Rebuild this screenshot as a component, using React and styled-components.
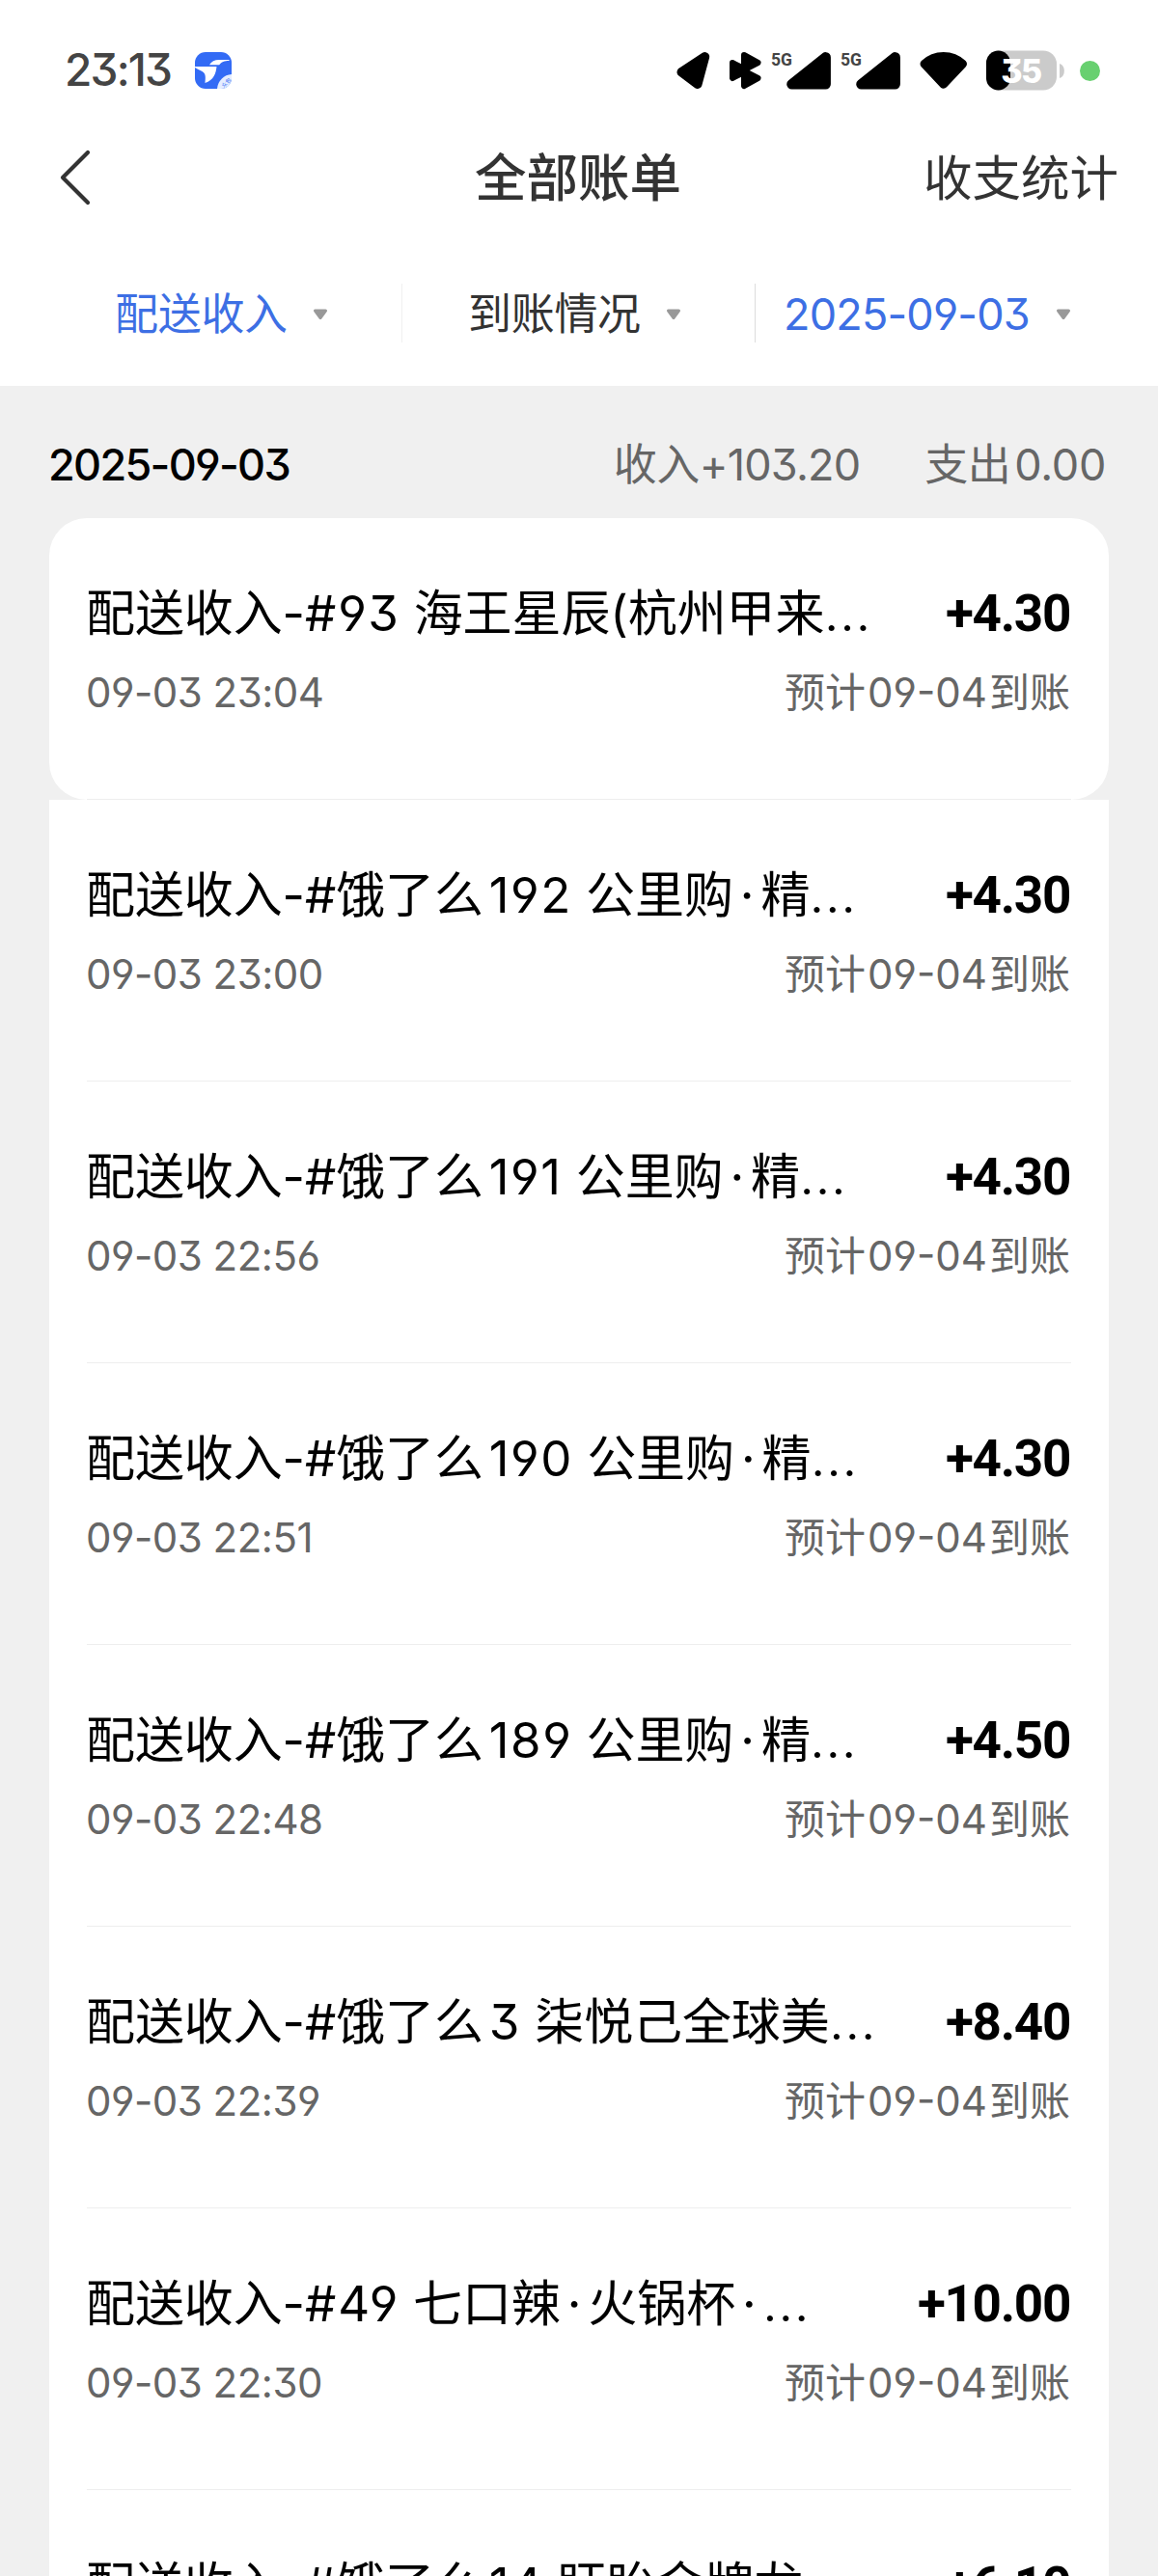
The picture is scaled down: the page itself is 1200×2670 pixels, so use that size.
import React from "react";
import styled, { createGlobalStyle, css } from "styled-components";

const GlobalStyle = createGlobalStyle`
  * { box-sizing: border-box; }
  body {
    margin: 0;
    background: #f0f0f0;
    font-family: Inter, "Noto Sans CJK SC", sans-serif;
    font-feature-settings: "cv03", "cv04", "cv09";
  }
`;

const Screen = styled.div`
  width: 1200px;
  height: 2670px;
  overflow: hidden;
  display: flex;
  flex-direction: column;
  background: #f0f0f0;
`;

const TopArea = styled.header`
  flex: none;
  height: 400px;
  background: #fff;
  display: flex;
  flex-direction: column;
`;

/* Status bar */
const StatusBar = styled.div`
  display: flex;
  justify-content: space-between;
  height: 62px;
  margin-top: 42px;
  padding: 0 60px 0 67px;
`;

const StatusGroup = styled.div`
  display: flex;
  align-items: center;

  svg {
    display: block;
    overflow: visible;
  }
`;

const Clock = styled.span`
  width: 135px;
  height: 62px;
  font-size: 46px;
  font-weight: 500;
  line-height: 61px;
  letter-spacing: -1.8px;
  color: #444;
`;

const IconSlot = styled.span`
  margin-left: ${(p) => p.$gap}px;
`;

const PrivacyDot = styled.span`
  width: 21px;
  height: 21px;
  margin-left: 16px;
  border-radius: 50%;
  background: #68d070;
`;

/* Navigation */
const NavBar = styled.nav`
  display: grid;
  grid-template-columns: 1fr auto 1fr;
  height: 76px;
  margin-top: 43px;
  line-height: 75px;
  color: #333;
`;

const BackButton = styled.button`
  display: flex;
  align-items: center;
  padding: 0 0 2px 60px;
  border: 0;
  background: none;
`;

const NavTitle = styled.h1`
  margin: 0 2px 0 0;
  font-size: 53.5px;
  font-weight: 500;
`;

const NavAction = styled.a`
  padding-right: 41px;
  text-align: right;
  font-size: 50.5px;
`;

/* Filters */
const FilterBar = styled.div`
  display: grid;
  grid-template-columns: 366px 366px 1fr;
  height: 61px;
  margin: 71px 0 0 51px;
`;

const Filter = styled.div`
  display: flex;
  align-items: center;
  gap: ${(p) => p.$gap || 26}px;
  padding: 2px 0 0 ${(p) => p.$inset}px;
  font-size: 45px;
  line-height: 59px;
  letter-spacing: ${(p) => p.$tracking || "-0.3px"};
  color: ${(p) => (p.$active ? "#3d6fe4" : "#333")};
  ${(p) =>
    p.$divider &&
    css`
      border-right: 1px solid ${p.$divider};
    `}
`;

/* Day summary */
const DayHeader = styled.section`
  flex: none;
  display: flex;
  height: 137px;
  padding: 52px 54px 0 50px;
  font-size: 45px;
  line-height: 60px;
  color: #666;
`;

const DayDate = styled.span`
  margin-right: auto;
  font-weight: 500;
  letter-spacing: -1.7px;
  color: #000;
`;

const DayTotal = styled.span`
  margin-left: ${(p) => p.$gap || 0}px;
  letter-spacing: -0.5px;
`;

const TotalValue = styled.span`
  margin-left: ${(p) => p.$lead || 0}px;
  letter-spacing: ${(p) => p.$tracking || "-0.5px"};
`;

/* Bills */
const BillList = styled.main`
  flex: none;
  margin: 0 51px;
`;

const BillCard = styled.article`
  height: 292px;
  padding: 69px 39px 0;
  background: #fff;
  border-radius: ${(p) => (p.$rounded ? "39px" : "0")};
`;

const BillBody = styled.div`
  height: 223px;
  border-bottom: 1px solid #eee;
`;

const BillLine = styled.div`
  display: flex;
  justify-content: space-between;
  white-space: pre;
`;

const BillTitle = styled.span`
  margin-left: -1px;
  font-size: 51px;
  line-height: 60px;
  letter-spacing: -0.1px;
  color: #000;
`;

const Digits = styled.span`
  margin-left: ${(p) => (p.$afterHan ? "6px" : "2px")};
  letter-spacing: 1.5px;
`;

const Dot = styled.span`
  padding: 0 7px;
`;

const Ellipsis = styled.span`
  margin-left: -1px;
  font-size: 58px;
  font-weight: 300;
  line-height: 0;
`;

const Amount = styled.span`
  margin-right: 1px;
  font-family: Roboto, "Liberation Sans", sans-serif;
  font-size: 53px;
  font-weight: 700;
  line-height: 60px;
  letter-spacing: -1.3px;
  color: #000;
`;

const BillMeta = styled(BillLine)`
  margin-top: 27px;
  font-size: 42px;
  line-height: 50px;
  color: #666;
`;

const Time = styled.span`
  margin-left: -1px;
  letter-spacing: -0.5px;
`;

const Arrival = styled.span`
  margin-right: 1px;
`;

const ArrivalDate = styled.span`
  margin: 0 2px;
`;

const bills = [
  { title: "配送收入-#93 海王星辰(杭州甲来…", amount: "+4.30", time: "09-03 23:04" },
  { title: "配送收入-#饿了么192 公里购·精…", amount: "+4.30", time: "09-03 23:00" },
  { title: "配送收入-#饿了么191 公里购·精…", amount: "+4.30", time: "09-03 22:56" },
  { title: "配送收入-#饿了么190 公里购·精…", amount: "+4.30", time: "09-03 22:51" },
  { title: "配送收入-#饿了么189 公里购·精…", amount: "+4.50", time: "09-03 22:48" },
  { title: "配送收入-#饿了么3 柒悦己全球美…", amount: "+8.40", time: "09-03 22:39" },
  { title: "配送收入-#49 七口辣·火锅杯·…", amount: "+10.00", time: "09-03 22:30" },
  { title: "配送收入-#饿了么14 盱眙金牌龙…", amount: "+6.10" },
];

function MixedText({ text }) {
  const parts = text.split(/(\d+|·|…)/).filter(Boolean);
  return parts.map((part, i) => {
    if (/^\d/.test(part)) {
      return (
        <Digits key={i} $afterHan={!parts[i - 1].endsWith("#")}>
          {part}
        </Digits>
      );
    }
    if (part === "·") return <Dot key={i}>{part}</Dot>;
    if (part === "…") return <Ellipsis key={i}>{part}</Ellipsis>;
    return part;
  });
}

function AppLogo() {
  return (
    <svg width="38" height="38" viewBox="0 0 38 38">
      <defs>
        <clipPath id="logo-clip">
          <rect width="38" height="38" rx="11" />
        </clipPath>
      </defs>
      <g clipPath="url(#logo-clip)">
        <rect width="38" height="38" fill="#336bf5" />
        <path
          fill="#fff"
          d="M15 13.3 C17 9.6 20.5 8 25 8 L35.5 8 L35.5 8.9 C30.5 9 27.5 10 25.2 13.3 Z"
        />
        <path
          fill="#fff"
          d="M0 15 L22.5 15 C21.8 22 19.5 29 10.5 32 C11 26 11.5 22.5 7.5 20 C5 18.3 2 17.6 0 16 Z"
        />
        <circle cx="39" cy="39" r="16" fill="#e6eeff" />
        <text x="0" y="0" fontSize="5.5" fill="#336bf5" transform="translate(30 37) rotate(-45)">
          众包
        </text>
      </g>
    </svg>
  );
}

function LocationIcon() {
  return (
    <svg width="35" height="38" viewBox="0 0 35 38">
      <path
        d="M5.2 20.8 L29.5 4.8 L21.8 33.2 Z"
        stroke="#000"
        strokeWidth="9.5"
        strokeLinejoin="round"
      />
    </svg>
  );
}

function BluetoothIcon() {
  return (
    <svg width="33" height="38" viewBox="0 0 33 38">
      <g stroke="#000" strokeWidth="6" strokeLinejoin="round">
        <path d="M15 3 L29.5 11 L15 18.5 Z" />
        <path d="M15 19.5 L29.5 27 L15 35 Z" />
        <path d="M3 11 L15 17 V21 L3 27 Z" />
      </g>
    </svg>
  );
}

function SignalIcon() {
  return (
    <svg width="61" height="39" viewBox="0 0 61 39">
      <text x="-1" y="14.2" fontFamily="Roboto, sans-serif" fontSize="17.5" fontWeight="700" fill="#444">
        5G
      </text>
      <path
        d="M20.5 33.3 L55.6 5.4 V33.3 Z"
        stroke="#000"
        strokeWidth="10.6"
        strokeLinejoin="round"
      />
    </svg>
  );
}

function WifiIcon() {
  return (
    <svg width="50" height="38" viewBox="0 0 50 38">
      <path
        d="M5 12.2 C16 1.8 33.5 1.8 44.5 12.2 L24.7 33.2 Z"
        stroke="#000"
        strokeWidth="9"
        strokeLinejoin="round"
      />
    </svg>
  );
}

function BatteryIcon() {
  return (
    <svg width="81" height="42" viewBox="0 0 81 42">
      <rect x="0" y="0.5" width="73" height="41" rx="14" fill="#cbcbcb" />
      <rect x="0" y="0.5" width="25" height="41" rx="12.5" fill="#000" />
      <path d="M76 14 C82.5 15.5 82.5 27.5 76 29 Z" fill="#cbcbcb" />
      <text
        x="36"
        y="33.5"
        textAnchor="middle"
        fontSize="34"
        fontWeight="800"
        letterSpacing="-1.5"
        fill="#fff"
      >
        35
      </text>
    </svg>
  );
}

function BackIcon() {
  return (
    <svg width="34" height="58" viewBox="0 0 34 58" fill="none">
      <path
        d="M31 3 L5 29 L31 55"
        stroke="#333"
        strokeWidth="4.2"
        strokeLinecap="round"
        strokeLinejoin="round"
      />
    </svg>
  );
}

function Caret() {
  return (
    <svg width="16" height="12" viewBox="0 0 16 12">
      <path
        d="M2.5 2 H13.5 L8 9.5 Z"
        fill="#999"
        stroke="#999"
        strokeWidth="3"
        strokeLinejoin="round"
      />
    </svg>
  );
}

export default function App() {
  return (
    <Screen>
      <GlobalStyle />
      <TopArea>
        <StatusBar>
          <StatusGroup>
            <Clock>23:13</Clock>
            <AppLogo />
          </StatusGroup>
          <StatusGroup>
            <LocationIcon />
            <IconSlot $gap={20}>
              <BluetoothIcon />
            </IconSlot>
            <IconSlot $gap={11}>
              <SignalIcon />
            </IconSlot>
            <IconSlot $gap={11}>
              <SignalIcon />
            </IconSlot>
            <IconSlot $gap={20}>
              <WifiIcon />
            </IconSlot>
            <IconSlot $gap={19}>
              <BatteryIcon />
            </IconSlot>
            <PrivacyDot />
          </StatusGroup>
        </StatusBar>
        <NavBar>
          <BackButton aria-label="返回">
            <BackIcon />
          </BackButton>
          <NavTitle>全部账单</NavTitle>
          <NavAction>收支统计</NavAction>
        </NavBar>
        <FilterBar>
          <Filter $active $inset={68} $divider="#f0f0f0">
            配送收入
            <Caret />
          </Filter>
          <Filter $inset={68} $divider="#ddd">
            到账情况
            <Caret />
          </Filter>
          <Filter $active $inset={29} $gap={27} $tracking="-0.8px">
            2025-09-03
            <Caret />
          </Filter>
        </FilterBar>
      </TopArea>
      <DayHeader>
        <DayDate>2025-09-03</DayDate>
        <DayTotal>
          收入<TotalValue $tracking="-0.8px">+103.20</TotalValue>
        </DayTotal>
        <DayTotal $gap={67}>
          支出<TotalValue $lead={4} $tracking="-0.3px">0.00</TotalValue>
        </DayTotal>
      </DayHeader>
      <BillList>
        {bills.map((bill, i) => (
          <BillCard key={bill.title} $rounded={i === 0}>
            <BillBody>
              <BillLine>
                <BillTitle>
                  <MixedText text={bill.title} />
                </BillTitle>
                <Amount>{bill.amount}</Amount>
              </BillLine>
              {bill.time && (
                <BillMeta>
                  <Time>{bill.time}</Time>
                  <Arrival>
                    预计<ArrivalDate>09-04</ArrivalDate>到账
                  </Arrival>
                </BillMeta>
              )}
            </BillBody>
          </BillCard>
        ))}
      </BillList>
    </Screen>
  );
}
